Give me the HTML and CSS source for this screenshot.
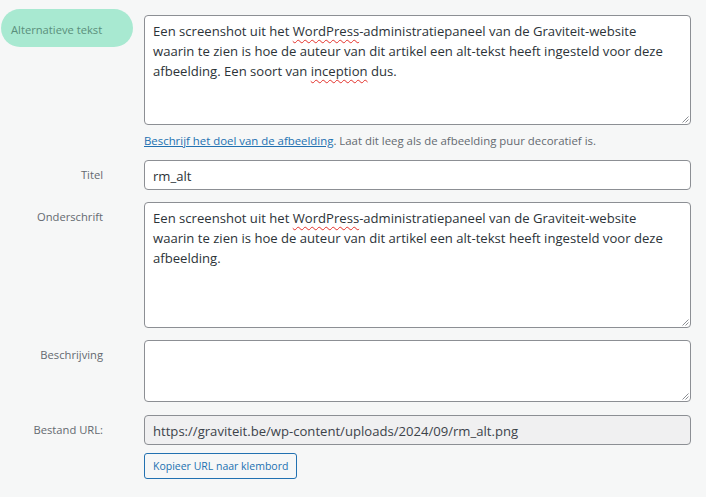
FILE: index.html
```html
<!DOCTYPE html>
<html lang="nl">
<head>
<meta charset="utf-8">
<title>Bijlage details</title>
<link rel="stylesheet" href="styles.css">
</head>
<body>
<div class="form">
  <div class="row">
    <div class="label pill">Alternatieve tekst</div>
    <div class="field field-first">
      <div class="box area area-alt"><span>Een screenshot uit het </span><span class="sp">WordPress</span><span>-administratiepaneel van de Graviteit-website waarin te zien is hoe de auteur van dit artikel een alt-tekst heeft ingesteld voor deze afbeelding. Een soort van </span><span class="sp">inception</span><span> dus.</span><svg class="grip" width="8" height="8" viewBox="0 0 8 8"><path d="M7.5 1.5 L1.5 7.5 M7.5 4.5 L4.5 7.5" stroke="#8c8f94" stroke-width="1"/></svg></div>
      <p class="help"><a href="#">Beschrijf het doel van de afbeelding</a><span>. Laat dit leeg als de afbeelding puur decoratief is.</span></p>
    </div>
  </div>
  <div class="row">
    <div class="label">Titel</div>
    <div class="field">
      <div class="box input">rm_alt</div>
    </div>
  </div>
  <div class="row">
    <div class="label">Onderschrift</div>
    <div class="field">
      <div class="box area area-caption"><span>Een screenshot uit het </span><span class="sp">WordPress</span><span>-administratiepaneel van de Graviteit-website waarin te zien is hoe de auteur van dit artikel een alt-tekst heeft ingesteld voor deze afbeelding.</span><svg class="grip" width="8" height="8" viewBox="0 0 8 8"><path d="M7.5 1.5 L1.5 7.5 M7.5 4.5 L4.5 7.5" stroke="#8c8f94" stroke-width="1"/></svg></div>
    </div>
  </div>
  <div class="row">
    <div class="label">Beschrijving</div>
    <div class="field">
      <div class="box area area-desc"><svg class="grip" width="8" height="8" viewBox="0 0 8 8"><path d="M7.5 1.5 L1.5 7.5 M7.5 4.5 L4.5 7.5" stroke="#8c8f94" stroke-width="1"/></svg></div>
    </div>
  </div>
  <div class="row row-url">
    <div class="label">Bestand URL:</div>
    <div class="field">
      <div class="box input readonly">https://graviteit.be/wp-content/uploads/2024/09/rm_alt.png</div>
      <button class="copy" type="button">Kopieer URL naar klembord</button>
    </div>
  </div>
</div>
</body>
</html>
```

FILE: styles.css
```css
html, body {
  margin: 0;
  padding: 0;
  background: #f6f7f7;
}

body {
  font-family: "Open Sans", "Noto Sans", sans-serif;
  color: #2c3338;
  width: 706px;
  height: 497px;
  overflow: hidden;
}

.form {
  display: flex;
  flex-direction: column;
  gap: 12px;
  padding: 9px 0 0 1px;
}

.row {
  display: grid;
  grid-template-columns: 132px 547px;
  column-gap: 11px;
  align-items: start;
}

.label {
  font-size: 11.2px;
  line-height: 20px;
  padding: 5px 30px 0 0;
  text-align: right;
  color: #646970;
}

.pill {
  text-align: left;
  padding: 11px 10px 7px 10px;
  background: #a8e9d1;
  color: #5a8f7b;
  border-radius: 19px;
}

.field-first {
  padding-top: 6px;
}

.box {
  position: relative;
  box-sizing: border-box;
  background: #fff;
  border: 1px solid #8c8f94;
  border-radius: 4px;
  font-size: 13.1px;
  line-height: 20px;
  color: #2c3338;
  padding: 5px 14px 5px 8px;
}

.area-alt { height: 110px; }
.area-caption { height: 126px; }
.area-desc { height: 62px; }

.input {
  height: 30px;
  white-space: nowrap;
}

.readonly {
  background: #f0f0f1;
  color: #3c434a;
}

.row-url {
  margin-top: 1px;
}

.sp {
  text-decoration: underline wavy #e3302a;
  text-decoration-thickness: 1px;
  text-underline-offset: 3px;
}

.grip {
  position: absolute;
  right: 1px;
  bottom: 1px;
}

.help {
  margin: 8px 0 -1px 0;
  font-size: 11.4px;
  line-height: 16px;
  color: #646970;
}

.help a {
  color: #2271b1;
  text-decoration: underline;
}

.copy {
  display: block;
  margin-top: 8px;
  height: 26px;
  padding: 0 8px;
  box-sizing: border-box;
  background: #f6f7f7;
  border: 1px solid #2271b1;
  border-radius: 3px;
  color: #2271b1;
  font-family: "Open Sans", "Noto Sans", sans-serif;
  font-size: 10.5px;
  line-height: 24px;
  cursor: pointer;
}
```
